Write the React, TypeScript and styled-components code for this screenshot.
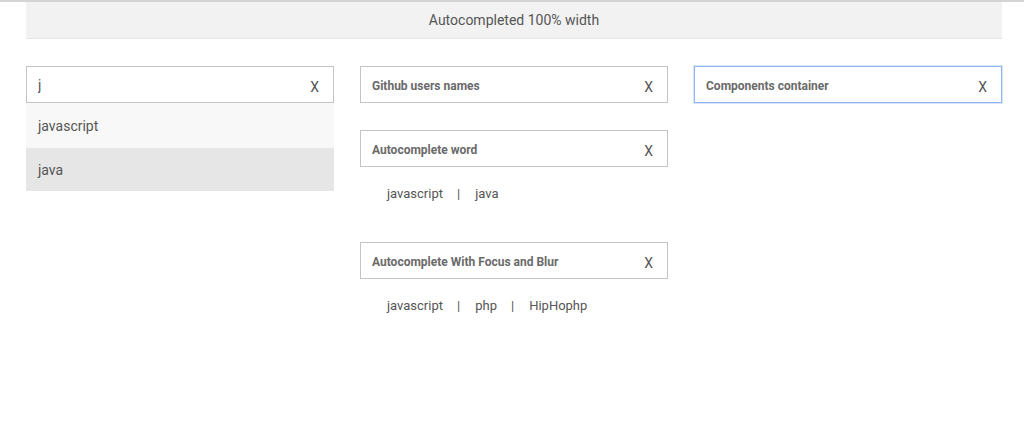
import React from "react";
import styled, { createGlobalStyle } from "styled-components";

const GlobalStyle = createGlobalStyle`
  html, body {
    margin: 0;
    padding: 0;
    background: #ffffff;
    font-family: Roboto, "Liberation Sans", Arial, sans-serif;
    color: #555555;
  }
  * {
    box-sizing: border-box;
  }
`;

const Page = styled.div`
  border-top: 2px solid #d4d4d4;
  min-height: 443px;
`;

const Container = styled.div`
  padding: 0 22px 0 26px;
`;

const Header = styled.div`
  height: 37px;
  display: flex;
  align-items: center;
  justify-content: center;
  background: #f2f2f2;
  border-bottom: 1px solid #e6e6e6;
  font-size: 14px;
  color: #555555;
`;

const Columns = styled.div`
  display: grid;
  grid-template-columns: repeat(3, 308px);
  column-gap: 26px;
  margin-top: 27px;
  align-items: start;
`;

const Column = styled.div`
  display: flex;
  flex-direction: column;
`;

const Field = styled.div<{ $focused?: boolean }>`
  position: relative;
  height: 37px;
  display: flex;
  align-items: center;
  padding: 0 10px 0 11px;
  border: 1px solid ${(p) => (p.$focused ? "#8fb4ef" : "#c4c4c4")};
  ${(p) => p.$focused && "box-shadow: 0 0 0 1px rgba(143, 180, 239, 0.35);"}
  background: #ffffff;
`;

const Input = styled.input`
  flex: 1;
  min-width: 0;
  border: none;
  outline: none;
  background: transparent;
  font-family: inherit;
  font-size: 14px;
  font-weight: 400;
  color: #555555;
  padding: 0;
  &::placeholder {
    color: #6a6a6a;
    font-size: 12px;
    font-weight: 700;
  }
`;

const Clear = styled.span`
  font-size: 14px;
  color: #555555;
  margin-top: 4px;
  padding-right: 4px;
`;

const Menu = styled.ul`
  list-style: none;
  margin: 0;
  padding: 0;
`;

const MenuItem = styled.li<{ $active?: boolean }>`
  height: ${(p) => (p.$active ? "43px" : "45px")};
  display: flex;
  align-items: center;
  padding-left: 12px;
  font-size: 14px;
  color: #555555;
  background: ${(p) => (p.$active ? "#e6e6e6" : "#f8f8f8")};
`;

const Words = styled.div<{ $space?: number }>`
  display: flex;
  align-items: center;
  padding-left: 27px;
  margin-top: 18px;
  margin-bottom: ${(p) => p.$space ?? 0}px;
  font-size: 13px;
  line-height: 17px;
  color: #555555;
`;

const Word = styled.span``;

const Sep = styled.span`
  margin: 0 15px 0 14px;
`;

const Spacer = styled.div<{ $h: number }>`
  height: ${(p) => p.$h}px;
`;

type BoxProps = {
  placeholder: string;
  value?: string;
  focused?: boolean;
};

const SearchBox: React.FC<BoxProps> = (props: BoxProps) => {
  return (
    <Field $focused={props.focused}>
      <Input
        placeholder={props.placeholder}
        defaultValue={props.value}
        autoFocus={props.focused}
      />
      <Clear>X</Clear>
    </Field>
  );
};

const WordList: React.FC<{ words: string[]; space?: number }> = ({ words, space }) => (
  <Words $space={space}>
    {words.map((w, i) => (
      <React.Fragment key={w}>
        {i > 0 && <Sep>|</Sep>}
        <Word>{w}</Word>
      </React.Fragment>
    ))}
  </Words>
);

const App: React.FC = () => {
  return (
    <Page>
      <GlobalStyle />
      <Container>
        <Header>Autocompleted 100% width</Header>
        <Columns>
          <Column>
            <SearchBox placeholder="" value="j" />
            <Menu>
              <MenuItem>javascript</MenuItem>
              <MenuItem $active>java</MenuItem>
            </Menu>
          </Column>
          <Column>
            <SearchBox placeholder="Github users names" />
            <Spacer $h={27} />
            <SearchBox placeholder="Autocomplete word" />
            <WordList words={["javascript", "java"]} space={40} />
            <SearchBox placeholder="Autocomplete With Focus and Blur" />
            <WordList words={["javascript", "php", "HipHophp"]} />
          </Column>
          <Column>
            <SearchBox placeholder="Components container" focused />
          </Column>
        </Columns>
      </Container>
    </Page>
  );
};

export default App;
